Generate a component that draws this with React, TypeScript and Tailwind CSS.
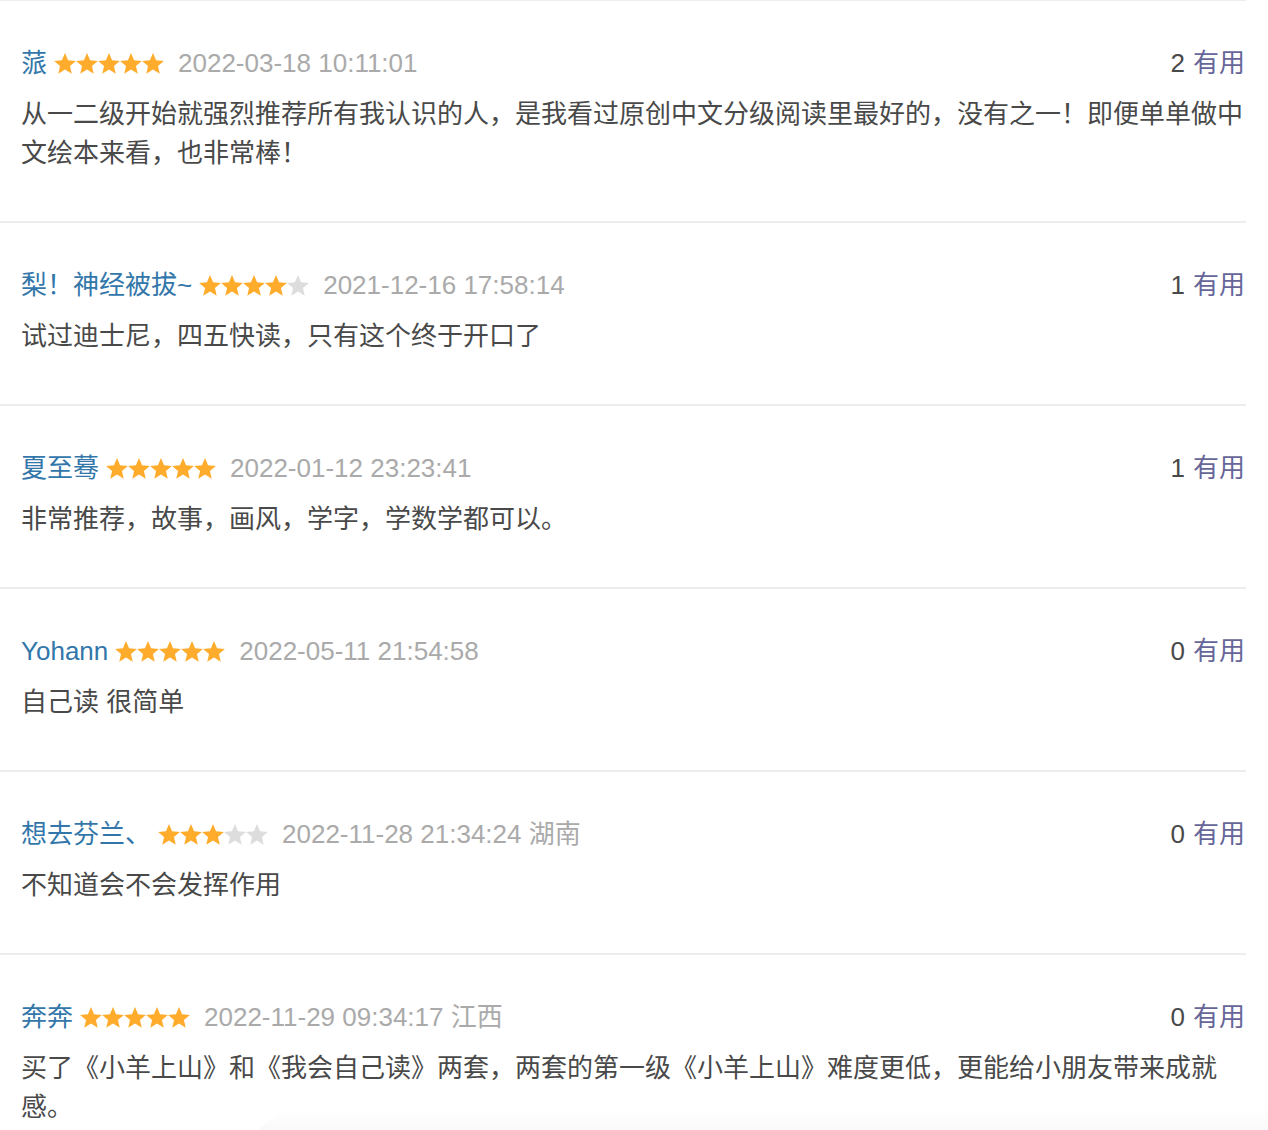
const reviews = [
  {
    name: "蒎",
    rating: 5,
    time: "2022-03-18 10:11:01",
    useful: 2,
    text: "从一二级开始就强烈推荐所有我认识的人，是我看过原创中文分级阅读里最好的，没有之一！即便单单做中文绘本来看，也非常棒！",
  },
  {
    name: "梨！神经被拔~",
    rating: 4,
    time: "2021-12-16 17:58:14",
    useful: 1,
    text: "试过迪士尼，四五快读，只有这个终于开口了",
  },
  {
    name: "夏至蓦",
    rating: 5,
    time: "2022-01-12 23:23:41",
    useful: 1,
    text: "非常推荐，故事，画风，学字，学数学都可以。",
  },
  {
    name: "Yohann",
    rating: 5,
    time: "2022-05-11 21:54:58",
    useful: 0,
    text: "自己读 很简单",
  },
  {
    name: "想去芬兰、",
    rating: 3,
    time: "2022-11-28 21:34:24 湖南",
    useful: 0,
    text: "不知道会不会发挥作用",
  },
  {
    name: "奔奔",
    rating: 5,
    time: "2022-11-29 09:34:17 江西",
    useful: 0,
    text: "买了《小羊上山》和《我会自己读》两套，两套的第一级《小羊上山》难度更低，更能给小朋友带来成就感。",
  },
];

const Star = ({ on }: { on: boolean }) => (
  <svg
    viewBox="2 2 20 19.3"
    className={on ? "w-[22px] h-[21px] text-[#ffac2d]" : "w-[22px] h-[21px] text-[#dddddd]"}
  >
    <path
      fill="currentColor"
      d="M12 17.27L18.18 21l-1.64-7.03L22 9.24l-7.19-.61L12 2 9.19 8.63 2 9.24l5.46 4.73L5.82 21z"
    />
  </svg>
);

const Stars = ({ rating }: { rating: number }) => (
  <span className="inline-flex items-center">
    {[1, 2, 3, 4, 5].map((i) => (
      <Star key={i} on={i <= rating} />
    ))}
  </span>
);

export default function App() {
  return (
    <div className="relative w-full min-h-[1130px] bg-white overflow-hidden font-['Liberation_Sans','Noto_Sans_CJK_SC',sans-serif] text-[26px]">
      <div className="w-[1246px] border-t border-[#eeeeee]">
        {reviews.map((r, i) => (
          <div
            key={i}
            className="pl-[21px] pr-[1px] pt-[44px] pb-[48px] border-b-2 border-[#ededed]"
          >
            <div className="flex items-center justify-between h-[36px] leading-[36px]">
              <div className="flex items-center">
                <span className="text-[#3377aa]">{r.name}</span>
                <span className="ml-[7px] flex items-center">
                  <Stars rating={r.rating} />
                </span>
                <span className="ml-[14px] text-[#aaaaaa]">{r.time}</span>
              </div>
              <div className="flex items-center">
                <span className="text-[#494949]">{r.useful}</span>
                <span className="ml-[8px] text-[#666699]">有用</span>
              </div>
            </div>
            <p className="mt-[14px] leading-[39px] text-[#494949]">{r.text}</p>
          </div>
        ))}
      </div>
      {/* soft shadow at the bottom edge */}
      <div className="pointer-events-none absolute left-[240px] right-0 bottom-0 h-[70px] rounded-tl-[80px] bg-gradient-to-b from-transparent to-[#efefef]" />
    </div>
  );
}
